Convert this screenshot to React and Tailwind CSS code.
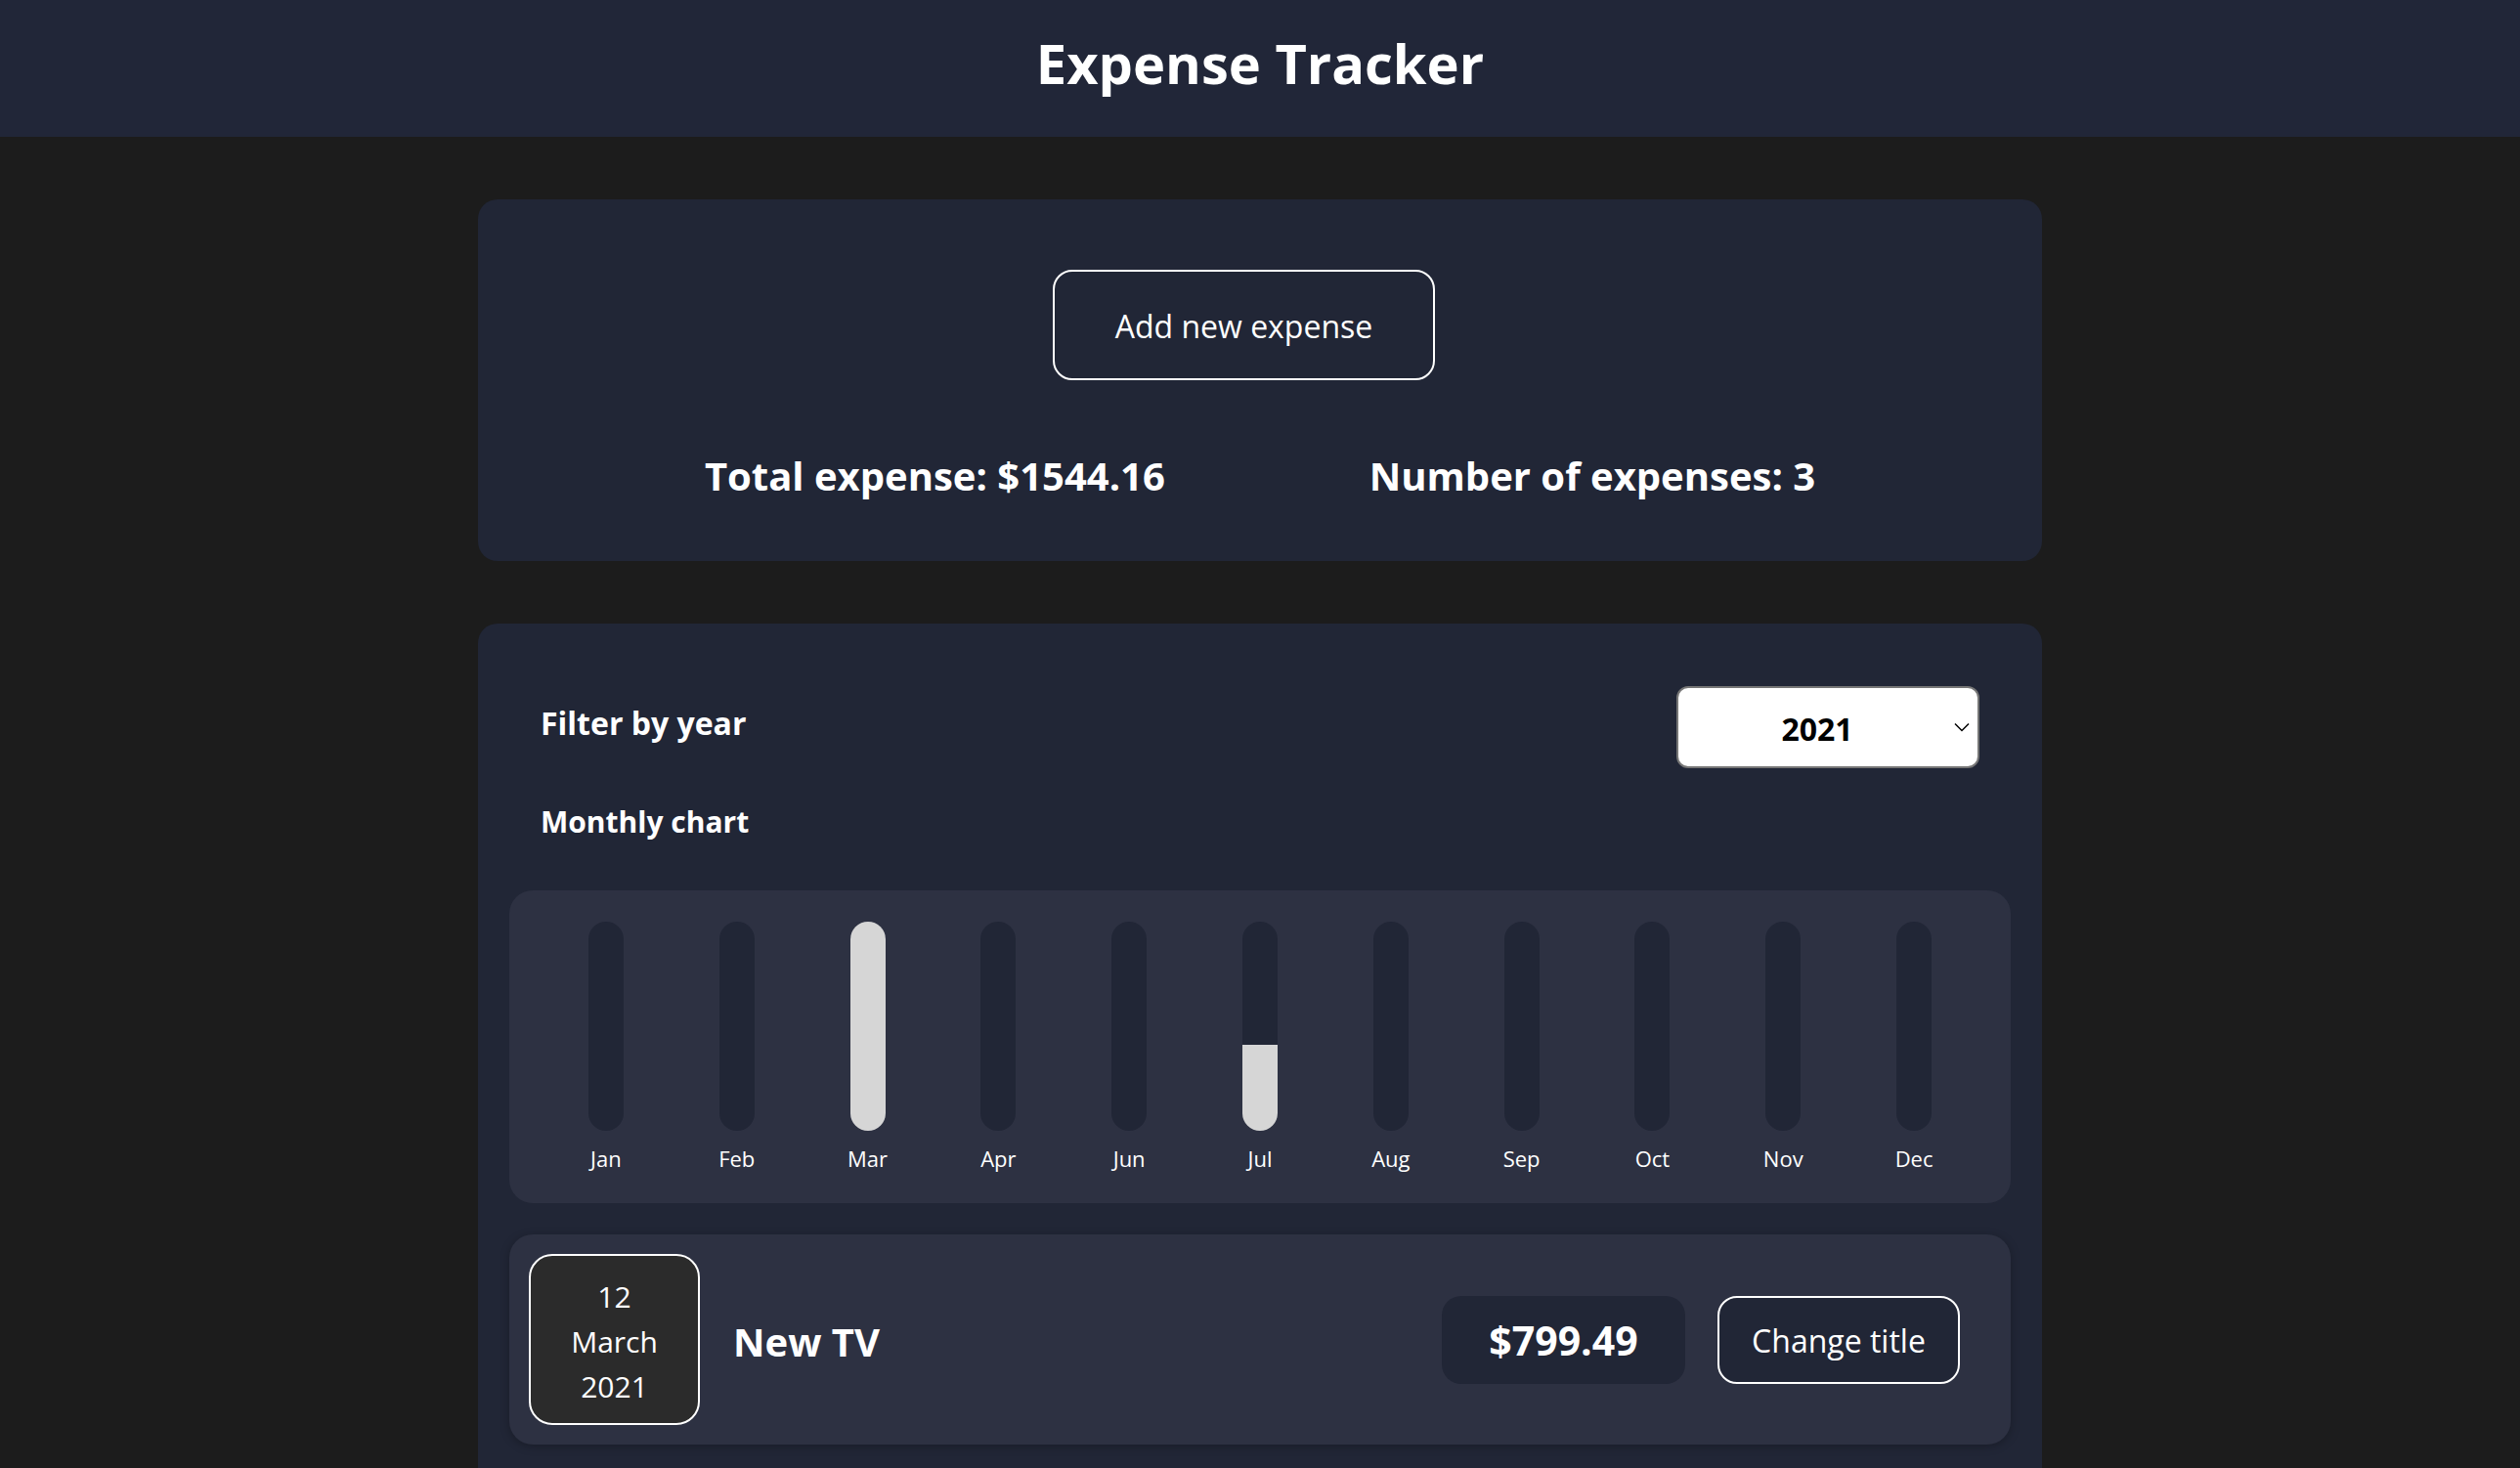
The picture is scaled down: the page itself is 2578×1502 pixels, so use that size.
import React, { useState } from 'react';

const expenses = [
  { id: 'e2', title: 'New TV', amount: 799.49, date: new Date(2021, 2, 12) },
  { id: 'e3', title: 'Car Insurance', amount: 294.67, date: new Date(2021, 2, 28) },
  { id: 'e4', title: 'New Desk (Wooden)', amount: 450, date: new Date(2021, 5, 12) },
];

// the chart only has 11 labels, it skips May
const months = ['Jan', 'Feb', 'Mar', 'Apr', 'Jun', 'Jul', 'Aug', 'Sep', 'Oct', 'Nov', 'Dec'];

const ExpenseDate = ({ date }) => (
  <div className="flex h-[175px] w-[175px] shrink-0 flex-col items-center justify-center rounded-[24px] border-2 border-white bg-[#2b2b2b] pt-[5px] text-[30px] leading-[46px] text-white">
    <div>{date.getDate()}</div>
    <div>{date.toLocaleString('en-US', { month: 'long' })}</div>
    <div>{date.getFullYear()}</div>
  </div>
);

const ExpenseItem = ({ expense }) => (
  <div className="flex items-center rounded-[24px] bg-[#2d3142] py-[20px] pl-[20px] pr-[52px] shadow-[0_2px_10px_rgba(0,0,0,0.25)]">
    <ExpenseDate date={expense.date} />
    <h2 className="ml-[34px] mt-[4px] flex-1 text-[40px] font-bold text-white">{expense.title}</h2>
    <div className="flex h-[90px] w-[249px] items-center justify-center rounded-[20px] bg-[#212636] pt-[3px] text-[41px] font-bold text-white">
      ${expense.amount}
    </div>
    <button className="ml-[33px] h-[90px] w-[248px] rounded-[20px] border-2 border-white bg-[#212636] pt-[3px] text-[32px] text-white">
      Change title
    </button>
  </div>
);

const Chart = ({ items }) => {
  // month index is used directly, so the missing May label shifts everything after April
  const values = months.map((_, i) =>
    items.filter((e) => e.date.getMonth() === i).reduce((s, e) => s + e.amount, 0)
  );
  const max = Math.max(...values);

  return (
    <div className="grid grid-cols-11 rounded-[24px] bg-[#2d3142] px-[32px] pb-[31px] pt-[32px]">
      {months.map((m, i) => (
        <div key={m} className="flex flex-col items-center">
          <div className="flex h-[214px] w-[36px] flex-col justify-end overflow-hidden rounded-full bg-[#212636]">
            <div className="w-full bg-[#d6d6d6]" style={{ height: max ? `${(values[i] / max) * 100}%` : '0%' }} />
          </div>
          <span className="mt-[13px] text-[22px] leading-[30px] text-white">{m}</span>
        </div>
      ))}
    </div>
  );
};

export default function App() {
  const [year] = useState('2021');
  const filtered = expenses.filter((e) => e.date.getFullYear().toString() === year);
  const total = expenses.reduce((s, e) => s + e.amount, 0);

  return (
    <div className="h-screen overflow-hidden bg-[#1c1c1c] font-['Open_Sans',sans-serif]">
      <header className="flex h-[140px] items-center justify-center bg-[#212638] pb-[12px]">
        <h1 className="text-[56px] font-bold text-white">Expense Tracker</h1>
      </header>

      <main className="pt-[64px]">
        <section className="mx-auto w-[1600px] rounded-[20px] bg-[#212636] pb-[60px] pt-[72px]">
          <div className="flex justify-center pr-[33px]">
            <button className="h-[113px] w-[391px] rounded-[20px] border-2 border-white pt-[2px] text-[32px] text-white">
              Add new expense
            </button>
          </div>
          <div className="mt-[71px] flex justify-center gap-[209px] text-[40px] font-bold leading-[54px] text-white">
            <span>Total expense: ${total.toFixed(2)}</span>
            <span>Number of expenses: {expenses.length}</span>
          </div>
        </section>

        <section className="mx-auto mt-[64px] w-[1600px] rounded-[20px] bg-[#212636] px-[32px] pb-[32px] pt-[64px]">
          <div className="flex items-center justify-between px-[32px]">
            <label className="-mt-[8px] text-[32px] font-bold text-white">Filter by year</label>
            <div className="relative flex h-[84px] w-[310px] items-center justify-center rounded-[12px] border-2 border-[#767676] bg-white pr-[22px] pt-[4px]">
              <span className="text-[32px] font-bold text-black">{year}</span>
              <svg className="absolute right-[8px] top-1/2 h-[10px] w-[16px] -translate-y-1/2" viewBox="0 0 16 10" fill="none" stroke="black" strokeWidth="1.5">
                <path d="M1 1.5l7 7 7-7" />
              </svg>
            </div>
          </div>
          <h3 className="mt-[33px] px-[32px] text-[30px] font-bold leading-[43px] text-white">Monthly chart</h3>

          <div className="mt-[49px]">
            <Chart items={filtered} />
          </div>

          <ul className="mt-[32px] flex flex-col gap-[32px]">
            {filtered.map((e) => (
              <li key={e.id}>
                <ExpenseItem expense={e} />
              </li>
            ))}
          </ul>
        </section>
      </main>
    </div>
  );
}
